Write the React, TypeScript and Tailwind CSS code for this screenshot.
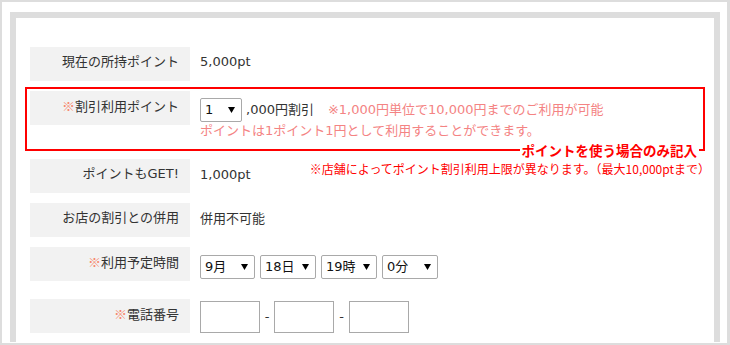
import React from "react";

const font = { fontFamily: '"DejaVu Sans", "Noto Sans CJK JP", sans-serif' };
const cjk = { fontFamily: '"Noto Sans CJK JP", "Noto Sans", sans-serif' };

function Label({ children, required }: { children: React.ReactNode; required?: boolean }) {
	return (
		<div className="w-[160px] h-[34px] shrink-0 bg-[#f2f2f2] pr-[11px] pt-[7px] text-right text-[13px] leading-[16px] text-[#333]">
			{required && <span style={cjk} className="text-[#f7886c]">※</span>}
			{children}
		</div>
	);
}

function FakeSelect({ value, width }: { value: string; width: string }) {
	return (
		<div
			className={`${width} h-[24px] flex items-center justify-between border border-[#a9a9a9] rounded-[2px] bg-white pl-[4px] pr-[6px] text-[13px] text-[#111]`}
		>
			<span>{value}</span>
			<svg width="7" height="6" viewBox="0 0 7 6" className="shrink-0">
				<path d="M0 0 H7 L3.5 6 Z" fill="#000" />
			</svg>
		</div>
	);
}

export default function App() {
	return (
		<div style={font} className="w-[730px] h-[345px] flex flex-col bg-white border-2 border-r-[3px] border-[#dddddd] pt-[10px] pl-[8px] pr-[7px] pb-px">
			<div className="flex-1 overflow-hidden">
				<div className="border-[6px] border-[#dddddd] px-[14px] pt-[29px] pb-[20px]">
					{/* 現在の所持ポイント */}
					<div className="flex">
						<Label>現在の所持ポイント</Label>
						<div className="pl-[10px] pt-[7px] text-[13px] leading-[16px] text-[#333]">5,000pt</div>
					</div>

					{/* 割引利用ポイント */}
					<div className="relative mt-[6px] -mx-[5px] h-[64px] border-2 border-[#ff0000] px-[3px] pt-[2px]">
						<div className="flex">
							<Label required>割引利用ポイント</Label>
							<div className="pl-[10px] pt-[7px] text-[13px] leading-[18px]">
								<div className="flex items-center">
									<FakeSelect value="1" width="w-[42px]" />
									<span className="ml-[4px] text-[#333]">,000円割引</span>
									<span className="ml-[14px] text-[#f48383]">※1,000円単位で10,000円までのご利用が可能</span>
								</div>
								<div className="text-[#f48383]">ポイントは1ポイント1円として利用することができます。</div>
							</div>
						</div>
						<div
							style={cjk}
							className="absolute right-[4px] -bottom-[11px] bg-white px-[2px] text-[13.5px] font-bold leading-[20px] text-[#ff0000]"
						>
							ポイントを使う場合のみ記入
						</div>
					</div>

					{/* ポイントもGET! */}
					<div className="flex mt-[8px]">
						<Label>ポイントもGET!</Label>
						<div className="flex-1 flex justify-between items-start pl-[10px] text-[#333]">
							<span className="pt-[8px] text-[13px] leading-[16px]">1,000pt</span>
							<span style={cjk} className="-mr-[10px] pt-[2px] text-[12px] leading-[16px] text-[#ff0000]">
								※店舗によってポイント割引利用上限が異なります。（最大10,000ptまで）
							</span>
						</div>
					</div>

					{/* お店の割引との併用 */}
					<div className="flex mt-[10px]">
						<Label>お店の割引との併用</Label>
						<div className="pl-[10px] pt-[8px] text-[13px] leading-[16px] text-[#333]">併用不可能</div>
					</div>

					{/* 利用予定時間 */}
					<div className="flex mt-[10px]">
						<Label required>利用予定時間</Label>
						<div className="flex gap-[5px] pl-[10px] pt-[8px]">
							<FakeSelect value="9月" width="w-[55px]" />
							<FakeSelect value="18日" width="w-[56px]" />
							<FakeSelect value="19時" width="w-[56px]" />
							<FakeSelect value="0分" width="w-[56px]" />
						</div>
					</div>

					{/* 電話番号 */}
					<div className="flex mt-[18px]">
						<Label required>電話番号</Label>
						<div className="flex items-center pl-[10px] pt-[2px] text-[13px] text-[#333]">
							<div className="w-[60px] h-[32px] border border-[#a9a9a9] bg-white" />
							<span className="w-[14px] text-center">-</span>
							<div className="w-[60px] h-[32px] border border-[#a9a9a9] bg-white" />
							<span className="w-[15px] text-center">-</span>
							<div className="w-[60px] h-[32px] border border-[#a9a9a9] bg-white" />
						</div>
					</div>
				</div>
			</div>
		</div>
	);
}
